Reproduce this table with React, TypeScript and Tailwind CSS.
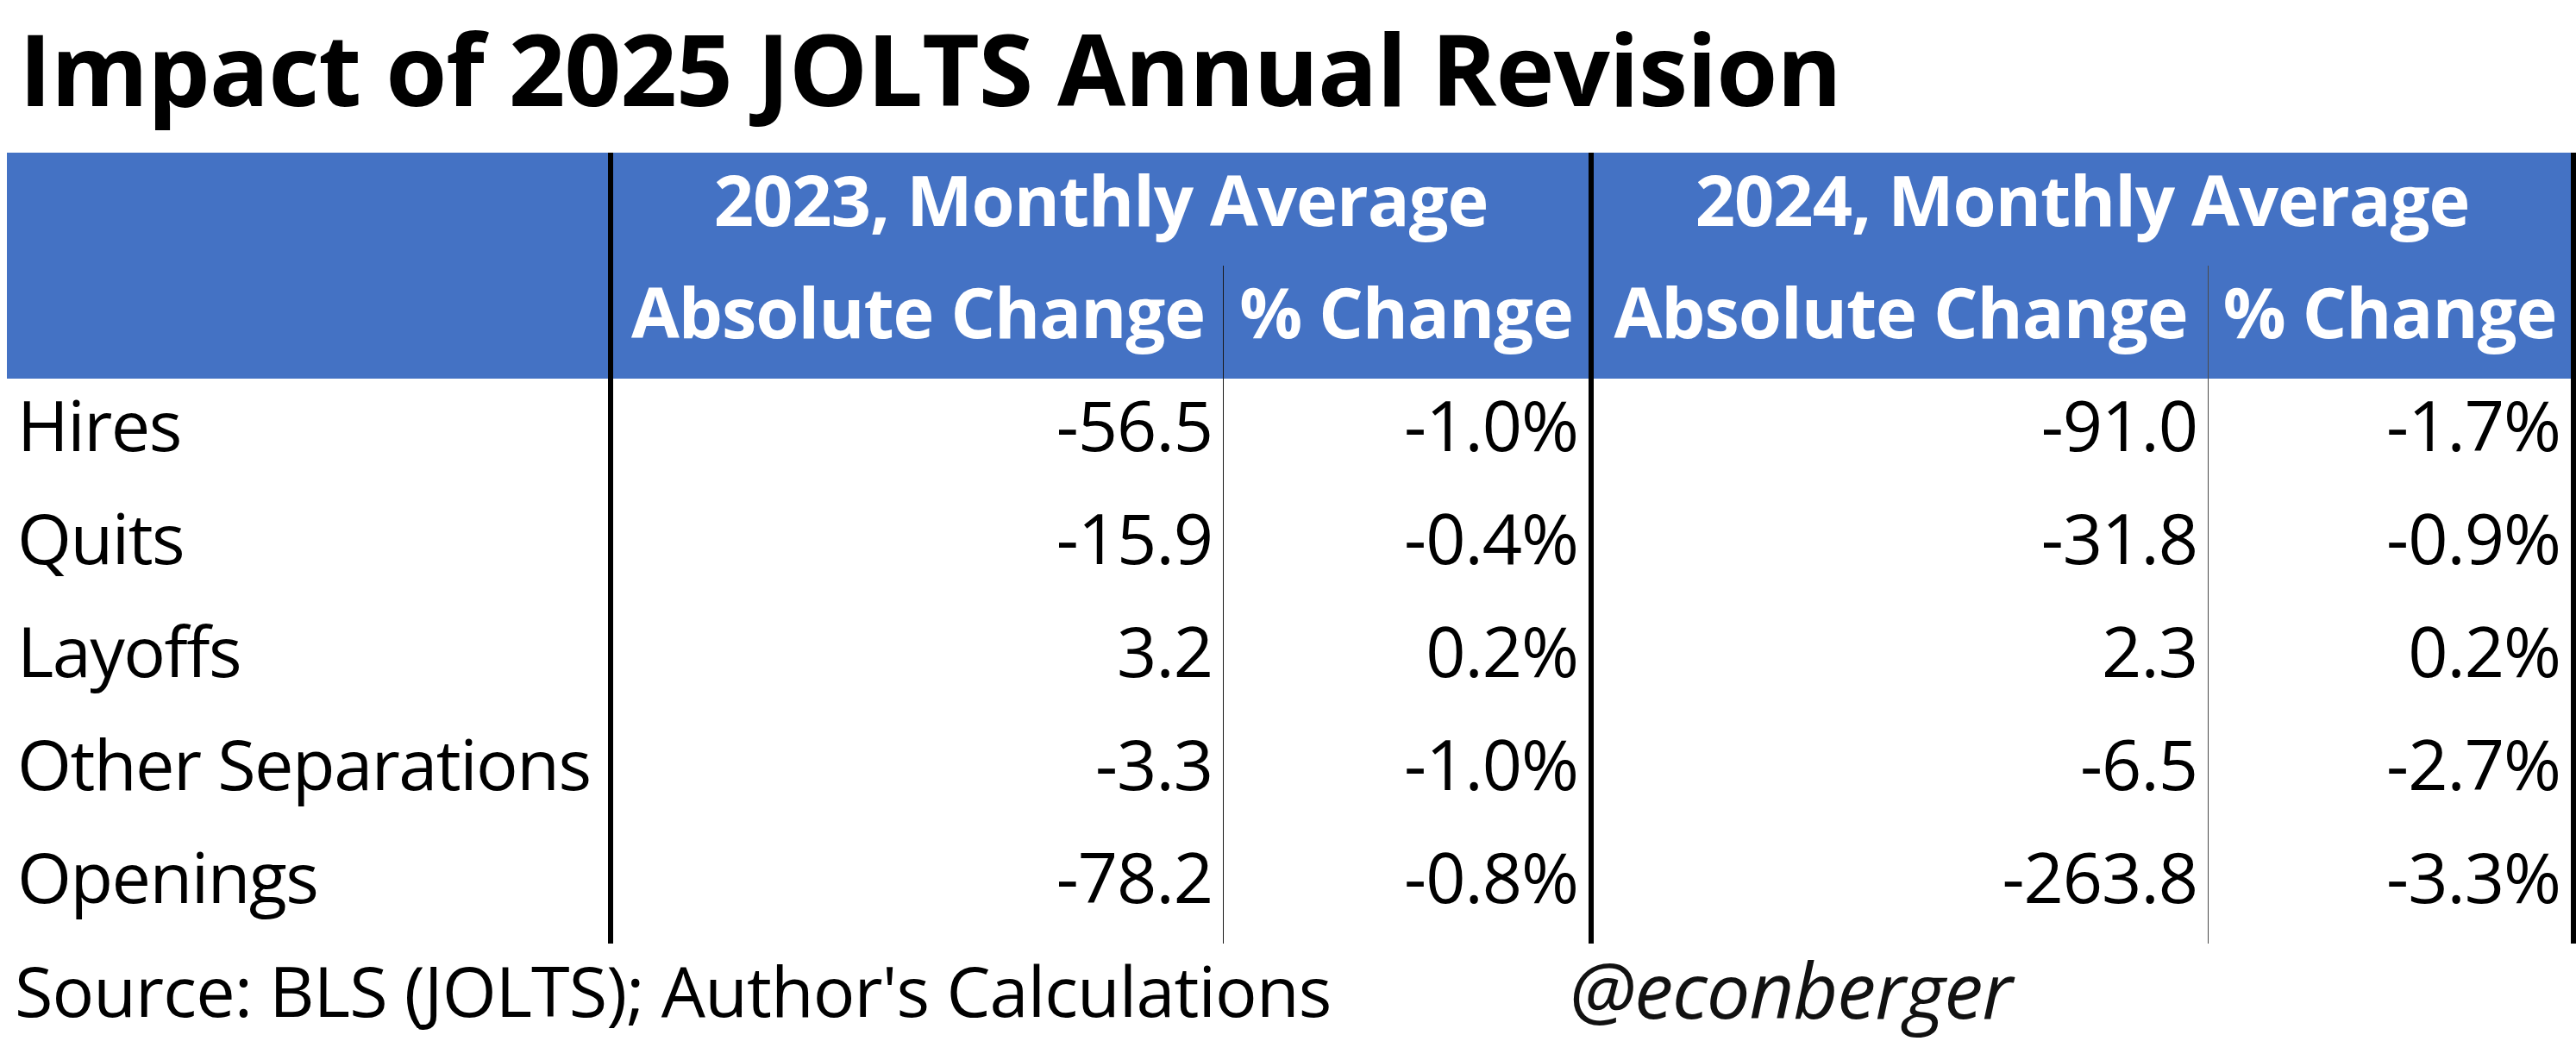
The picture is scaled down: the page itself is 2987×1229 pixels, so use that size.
export default function App() {
  const rows = [
    ["Hires", "-56.5", "-1.0%", "-91.0", "-1.7%"],
    ["Quits", "-15.9", "-0.4%", "-31.8", "-0.9%"],
    ["Layoffs", "3.2", "0.2%", "2.3", "0.2%"],
    ["Other Separations", "-3.3", "-1.0%", "-6.5", "-2.7%"],
    ["Openings", "-78.2", "-0.8%", "-263.8", "-3.3%"],
  ];
  return (
    <div className="w-[2987px] h-[1229px] bg-white text-black overflow-hidden font-['Open_Sans','Noto_Sans',sans-serif]">
      <div className="h-[177px] pl-[22px] pt-[16px]">
        <div className="text-[115px] leading-[1.1] font-bold tracking-[-1px] whitespace-nowrap">
          Impact of 2025 JOLTS Annual Revision
        </div>
      </div>
      <div className="ml-[8px] grid grid-cols-[697px_713px_424px_718px_427px] text-[81px] leading-none">
        <div className="row-span-2 bg-[#4472C4]" />
        <div className="col-span-2 h-[131px] bg-[#4472C4] border-l-[6px] border-black text-white font-bold tracking-[-1px] text-center pt-[13px] whitespace-nowrap">
          2023, Monthly Average
        </div>
        <div className="col-span-2 h-[131px] bg-[#4472C4] border-l-[6px] border-r-[6px] border-black text-white font-bold tracking-[-1px] text-center pt-[13px] whitespace-nowrap">
          2024, Monthly Average
        </div>
        <div className="h-[131px] bg-[#4472C4] border-l-[6px] border-black text-white font-bold tracking-[-1px] text-center pt-[12px] whitespace-nowrap">
          Absolute Change
        </div>
        <div className="h-[131px] bg-[#4472C4] border-l border-[#1a1a1a] text-white font-bold tracking-[-1px] text-center pt-[12px] whitespace-nowrap">
          % Change
        </div>
        <div className="h-[131px] bg-[#4472C4] border-l-[6px] border-black text-white font-bold tracking-[-1px] text-center pt-[12px] whitespace-nowrap">
          Absolute Change
        </div>
        <div className="h-[131px] bg-[#4472C4] border-l border-l-[#4a4a4a] border-r-[6px] border-r-black text-white font-bold tracking-[-1px] text-center pt-[12px] whitespace-nowrap">
          % Change
        </div>
        {rows.map((r) => (
          <Row key={r[0]} r={r} />
        ))}
      </div>
      <div className="flex items-start pt-[13px] h-[135px]">
        <div className="w-[1800px] pl-[17px] text-[81px] leading-none tracking-[-0.9px] whitespace-nowrap">
          Source: BLS (JOLTS); Author's Calculations
        </div>
        <div className="pl-[20px] -mt-[6px] text-[90px] leading-none italic tracking-[-1px] text-[#111] whitespace-nowrap">
          @econberger
        </div>
      </div>
    </div>
  );
}

function Row({ r }: { r: string[] }) {
  return (
    <>
      <div className="h-[131px] pl-[12px] pt-[12px] tracking-[-1.5px] whitespace-nowrap">{r[0]}</div>
      <div className="h-[131px] border-l-[6px] border-black text-right pr-[12px] pt-[12px] tracking-[-1px]">{r[1]}</div>
      <div className="h-[131px] border-l border-[#1a1a1a] text-right pr-[12px] pt-[12px] tracking-[-1px]">{r[2]}</div>
      <div className="h-[131px] border-l-[6px] border-black text-right pr-[12px] pt-[12px] tracking-[-1px]">{r[3]}</div>
      <div className="h-[131px] border-l border-l-[#4a4a4a] border-r-[6px] border-r-black text-right pr-[12px] pt-[12px] tracking-[-1px]">{r[4]}</div>
    </>
  );
}
